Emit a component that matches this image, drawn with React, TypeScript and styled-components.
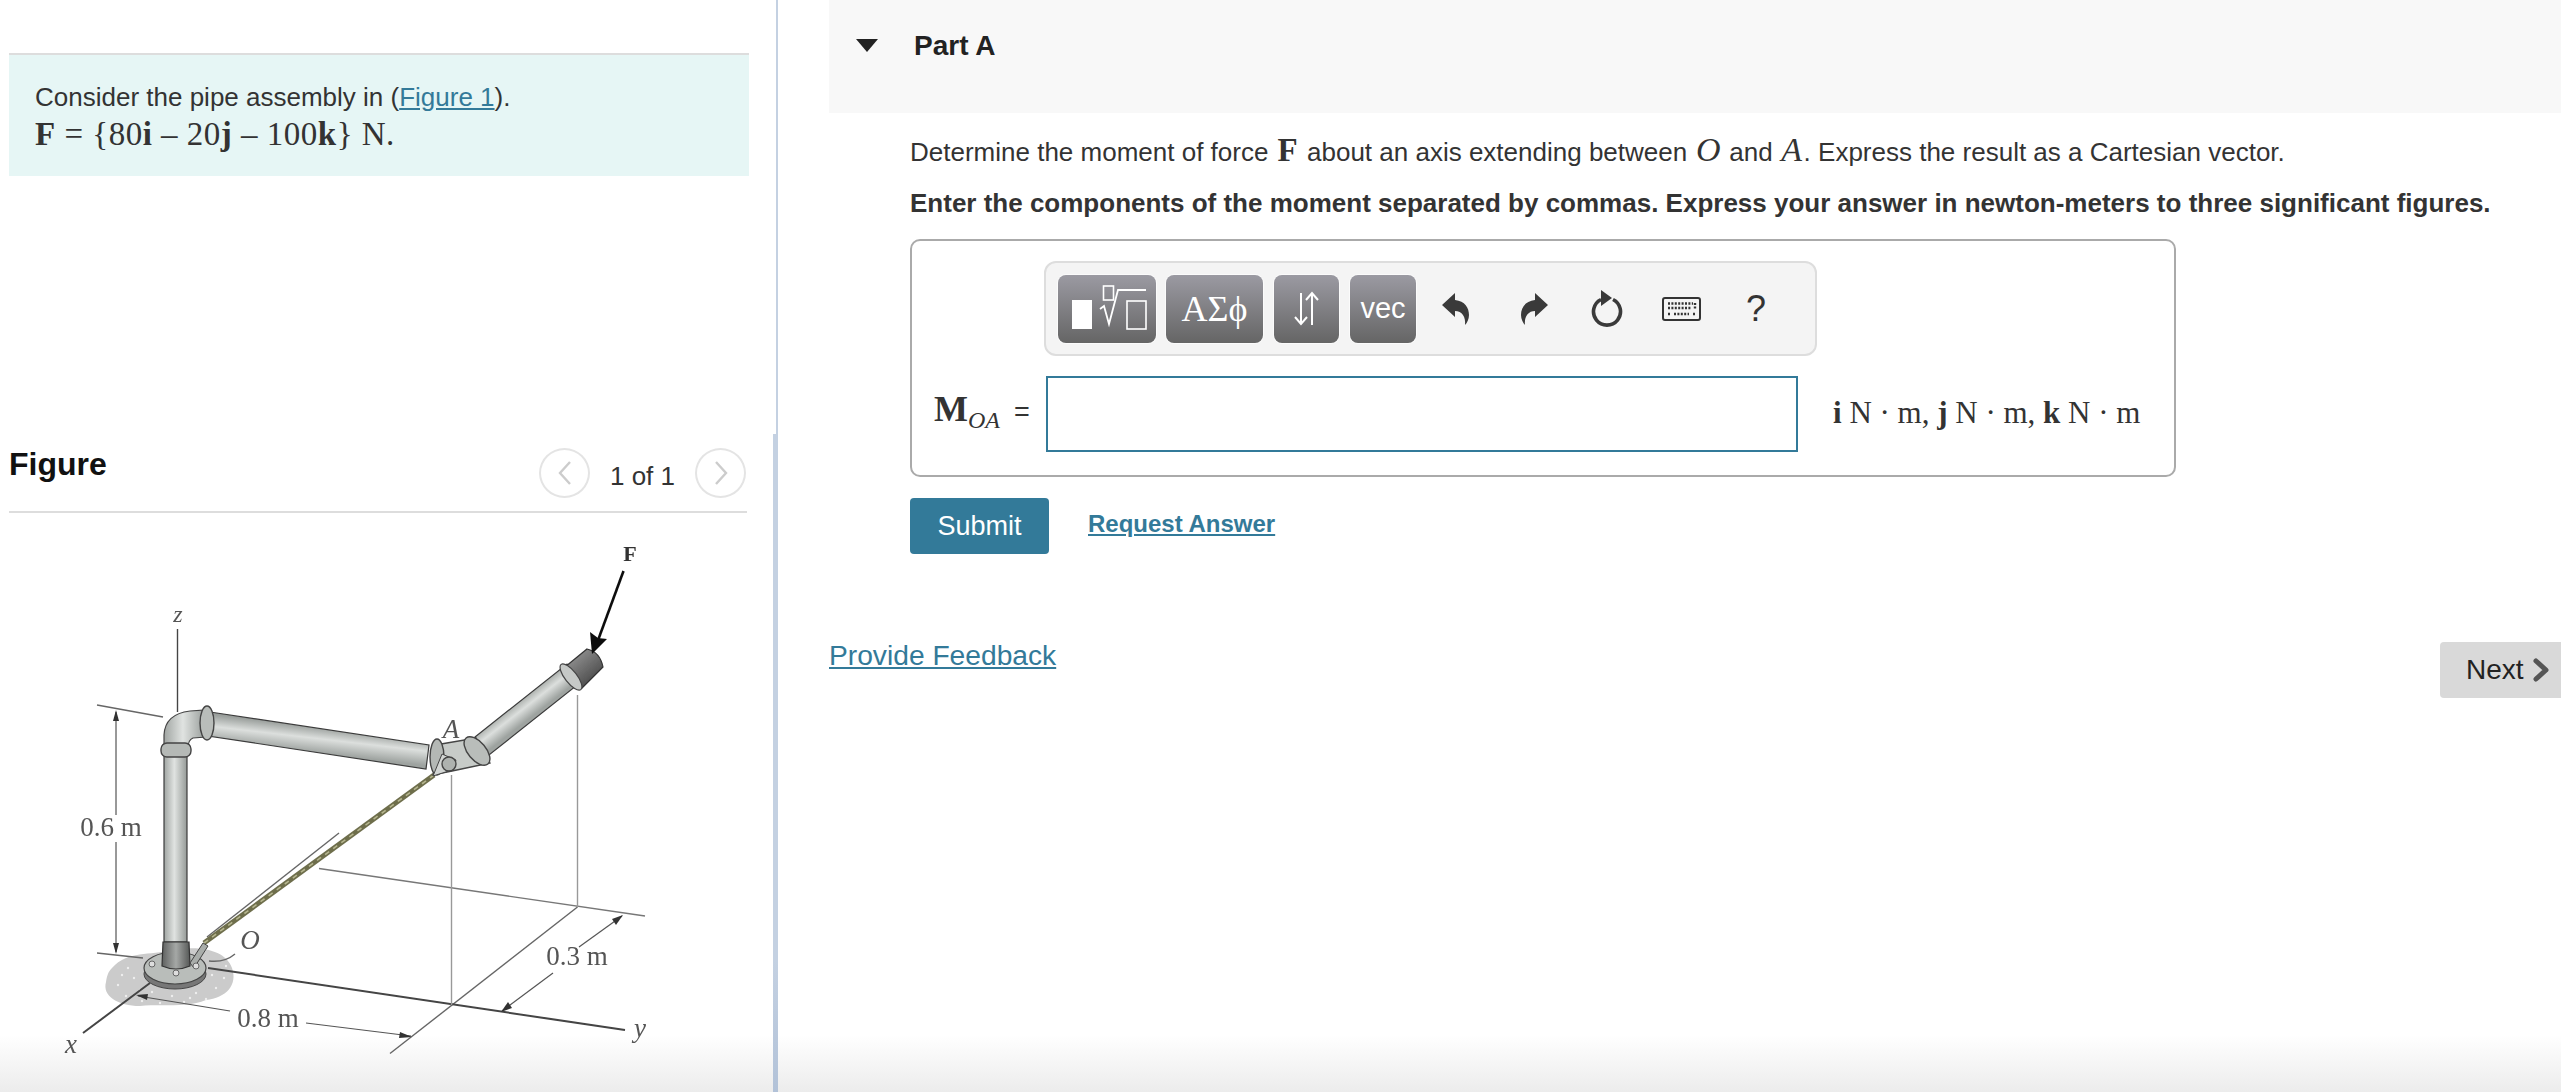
import React from "react";
import styled, { createGlobalStyle } from "styled-components";

const GlobalStyle = createGlobalStyle`
  html, body {
    margin: 0;
    height: 100%;
    overflow: hidden;
  }
  body {
    font-family: "Liberation Sans", Arial, sans-serif;
    color: #333;
    background: linear-gradient(to bottom, #fff 1035px, #ececec 1092px);
  }
  #root {
    height: 100%;
  }
`;

const Page = styled.div`
  display: flex;
  height: 100%;
`;

const LeftPanel = styled.aside`
  width: 764px;
  padding-left: 9px;
  padding-top: 53px;
  flex-shrink: 0;
`;

const Intro = styled.div`
  width: 740px;
  height: 123px;
  box-sizing: border-box;
  border-top: 2px solid #ddd;
  background: #e6f6f5;
  padding: 24px 26px 0;
  font-size: 26px;
  line-height: 36px;
`;

const Link = styled.a<{ $bold?: boolean }>`
  color: #337a99;
  text-decoration: underline;
  font-weight: ${({ $bold }) => ($bold ? 700 : 400)};
`;

const Formula = styled.div`
  font-family: "Liberation Serif", serif;
  font-size: 33px;
  letter-spacing: 0.5px;
  color: #333;
  margin-top: 1px;
`;

const FigureHeader = styled.div`
  margin-top: 272px;
  width: 738px;
  height: 65px;
  box-sizing: border-box;
  border-bottom: 2px solid #ddd;
  display: flex;
  align-items: flex-start;
`;

const FigureTitle = styled.h2`
  margin: 0;
  flex: 1;
  font-size: 32px;
  line-height: 33px;
  color: #111;
`;

const Pager = styled.div`
  display: flex;
  align-items: center;
  height: 50px;
  margin-right: 1px;
`;

const PagerText = styled.span`
  width: 105px;
  text-align: center;
  font-size: 26px;
  padding-top: 7px;
`;

const PagerButton = styled.button`
  width: 51px;
  height: 50px;
  padding: 0;
  border: 2px solid #e4e4e4;
  border-radius: 50%;
  background: #fff;
  display: flex;
  align-items: center;
  justify-content: center;
`;

const FigureArt = styled.svg`
  display: block;
  margin-left: -9px;
  margin-top: 7px;
`;

const Divider = styled.div`
  width: 5px;
  flex-shrink: 0;
  display: flex;
  flex-direction: column;
  align-items: flex-end;
`;

const DividerPart = styled.div<{ $wide?: boolean }>`
  background: ${({ $wide }) => ($wide ? "linear-gradient(#c4d1e2 80%, #b2c2d8)" : "#c4d1e2")};
  width: ${({ $wide }) => ($wide ? "5px" : "2px")};
  height: ${({ $wide }) => ($wide ? "658px" : "434px")};
`;

const RightPanel = styled.main`
  flex: 1;
  padding-left: 51px;
  min-width: 0;
`;

const PartHeader = styled.div`
  height: 113px;
  background: #f8f8f8;
  display: flex;
  padding: 28px 0 0 27px;
  box-sizing: border-box;
`;

const Caret = styled.div`
  width: 0;
  height: 0;
  margin-top: 11px;
  border-left: 11px solid transparent;
  border-right: 11px solid transparent;
  border-top: 13px solid #222;
`;

const PartTitle = styled.h3`
  margin: 0 0 0 36px;
  font-size: 28px;
  line-height: 36px;
  color: #222;
`;

const PartBody = styled.div`
  padding-left: 81px;
`;

const Prompt = styled.p`
  margin: 20px 0 0;
  font-size: 26px;
  line-height: 36px;
`;

const Instruction = styled.p`
  margin: 15px 0 0;
  font-size: 26px;
  line-height: 36px;
  font-weight: 700;
`;

const MathBold = styled.b`
  font-family: "Liberation Serif", serif;
  font-size: 33px;
  line-height: 1;
  margin: 0 2px;
`;

const MathItalic = styled.i`
  font-family: "Liberation Serif", serif;
  font-size: 34px;
  line-height: 1;
  margin: 0 1.5px;
`;

const AnswerBox = styled.div`
  margin-top: 18px;
  width: 1266px;
  height: 238px;
  box-sizing: border-box;
  border: 2px solid #aaa;
  border-radius: 10px;
  padding: 20px 0 0 132px;
`;

const Toolbar = styled.div`
  width: 773px;
  height: 95px;
  box-sizing: border-box;
  border: 2px solid #ddd;
  border-radius: 12px;
  background: #f4f4f4;
  display: flex;
  align-items: center;
  padding-left: 12px;
`;

const ToolButton = styled.button<{ $w: number; $gap: number }>`
  width: ${({ $w }) => $w}px;
  height: 68px;
  margin-right: ${({ $gap }) => $gap}px;
  padding: 0;
  border: 0;
  border-radius: 8px;
  background: linear-gradient(to bottom, #9b9aa2, #656565);
  box-shadow: 0 0 0 1px #fbfbfb;
  color: #fff;
  display: flex;
  align-items: center;
  justify-content: center;
  font-size: 29px;
  font-family: "Liberation Sans", sans-serif;
`;

const ToolSerif = styled.span`
  font-family: "Liberation Serif", serif;
  font-size: 36px;
`;

const ToolIcon = styled.svg<{ $left: number }>`
  display: block;
  margin-left: ${({ $left }) => $left}px;
  flex-shrink: 0;
`;

const HelpMark = styled.span`
  margin-left: 45px;
  font-size: 36px;
  color: #333;
`;

const AnswerRow = styled.div`
  display: flex;
  align-items: center;
  margin: 20px 0 0 -110px;
  height: 76px;
`;

const AnswerLabel = styled.div`
  width: 112px;
  flex-shrink: 0;
  font-family: "Liberation Serif", serif;
  font-size: 36px;
  white-space: nowrap;
  padding-bottom: 11px;
`;

const LabelSub = styled.i`
  font-size: 24px;
  position: relative;
  top: 7px;
`;

const LabelEquals = styled.span`
  font-family: "Liberation Sans", sans-serif;
  font-size: 27px;
  margin-left: 14px;
`;

const AnswerInput = styled.input`
  width: 752px;
  height: 76px;
  box-sizing: border-box;
  border: 2px solid #337a99;
  background: #fff;
  outline: none;
`;

const Units = styled.div`
  margin-left: 35px;
  padding-bottom: 2px;
  font-family: "Liberation Serif", serif;
  font-size: 31px;
  white-space: nowrap;
`;

const Actions = styled.div`
  display: flex;
  align-items: flex-start;
  margin-top: 21px;
`;

const SubmitButton = styled.button`
  width: 139px;
  height: 56px;
  border: 0;
  border-radius: 4px;
  background: #337a99;
  color: #fff;
  font-family: "Liberation Sans", sans-serif;
  font-size: 27px;
`;

const RequestLink = styled(Link)`
  margin: 11px 0 0 39px;
  font-size: 24px;
  line-height: 30px;
`;

const FooterRow = styled.div`
  display: flex;
  justify-content: space-between;
  align-items: flex-start;
  margin-top: 83px;
`;

const FeedbackLink = styled(Link)`
  font-size: 28.2px;
  line-height: 36px;
`;

const NextButton = styled.button`
  width: 121px;
  height: 56px;
  margin-top: 5px;
  border: 0;
  border-radius: 4px 0 0 4px;
  background: #d9d9d9;
  color: #222;
  font-family: "Liberation Sans", sans-serif;
  font-size: 28px;
  display: flex;
  align-items: center;
  gap: 9px;
  padding: 0 0 0 26px;
`;

const specks = [
  [118, 985], [126, 996], [134, 978], [142, 1001], [152, 992], [160, 1003], [172, 996],
  [184, 1002], [196, 993], [206, 999], [216, 988], [224, 978], [212, 975], [128, 968],
  [122, 975], [140, 990], [190, 998], [226, 966],
];

const PipeFigure = () => (
  <FigureArt width={764} height={572} viewBox="0 520 764 572">
    <defs>
      <linearGradient id="pipeV" x1="0" x2="1" y1="0" y2="0">
        <stop offset="0" stopColor="#a0a5a2" />
        <stop offset="0.45" stopColor="#e0e3e1" />
        <stop offset="1" stopColor="#959a97" />
      </linearGradient>
      <linearGradient id="pipeTop" gradientUnits="userSpaceOnUse" x1="320" y1="727" x2="317" y2="753">
        <stop offset="0" stopColor="#9a9f9c" />
        <stop offset="0.45" stopColor="#dcdfdd" />
        <stop offset="1" stopColor="#9ea3a0" />
      </linearGradient>
      <linearGradient id="pipeFar" gradientUnits="userSpaceOnUse" x1="516" y1="700" x2="530" y2="718">
        <stop offset="0" stopColor="#9a9f9c" />
        <stop offset="0.5" stopColor="#dcdfdd" />
        <stop offset="1" stopColor="#9ea3a0" />
      </linearGradient>
      <linearGradient id="capFill" gradientUnits="userSpaceOnUse" x1="575" y1="656" x2="595" y2="680">
        <stop offset="0" stopColor="#8c8c8c" />
        <stop offset="1" stopColor="#4c4c4c" />
      </linearGradient>
      <linearGradient id="socket" x1="0" x2="1" y1="0" y2="0">
        <stop offset="0" stopColor="#5e605f" />
        <stop offset="0.5" stopColor="#a5a8a6" />
        <stop offset="1" stopColor="#565857" />
      </linearGradient>
      <filter id="soft" x="-5%" y="-5%" width="110%" height="110%">
        <feGaussianBlur stdDeviation="0.7" />
      </filter>
      <filter id="softText" x="-5%" y="-5%" width="110%" height="110%">
        <feGaussianBlur stdDeviation="0.35" />
      </filter>
    </defs>
    <g filter="url(#soft)">
      {/* ground patch */}
      <path
        d="M112 968 C128 950 150 956 172 950 C200 945 226 950 232 968 C238 985 226 998 206 1000 C188 1008 160 1004 140 1006 C118 1006 102 996 106 982 C107 976 108 972 112 968 Z"
        fill="#cbcbcb"
      />
      {specks.map(([x, y]) => (
        <circle key={`${x}-${y}`} cx={x} cy={y} r="1.2" fill="#eee" />
      ))}
      {/* floor lines */}
      <g stroke="#666" strokeWidth="1.4" fill="none">
        <path d="M97 705 L163 717" />
        <path d="M97 953 L143 958" />
        <path d="M319 868.5 L645 916" stroke="#777" />
        <path d="M577.5 907 L390 1053.5" />
        <path d="M150 983 L83 1033" strokeWidth="2" stroke="#444" />
        <path d="M208 968 L625 1030" strokeWidth="2" stroke="#444" />
        <path d="M177.5 629 L177.5 712" stroke="#444" />
        <path d="M451.5 775 L451.5 1005" stroke="#999" />
        <path d="M577.5 695 L577.5 907" stroke="#999" />
        <path d="M339 833 L207 937" stroke="#666" />
        <path d="M235 954 C228 960 218 962 209 961" />
      </g>
      {/* dimension lines */}
      <g stroke="#555" strokeWidth="1.2" fill="none">
        <path d="M116 712 L116 815" />
        <path d="M116 842 L116 952" />
        <path d="M138 996 L230 1011" />
        <path d="M306 1023 L411 1036" />
        <path d="M622 916 L579 947" />
        <path d="M553 973 L502 1011" />
      </g>
      <g fill="#333">
        <path d="M116 710 L113 721 L119 721 Z" />
        <path d="M116 954 L113 943 L119 943 Z" />
        <path d="M136 995 L148 994 L147 1000 Z" />
        <path d="M412 1037 L400 1032 L399 1038 Z" />
        <path d="M623 915 L612 919 L616 925 Z" />
        <path d="M501 1012 L512 1008 L508 1002 Z" />
      </g>
      {/* rod from O to A */}
      <path d="M204 943 L434 775" stroke="#6e6e4c" strokeWidth="5" />
      <path d="M204 943 L434 775" stroke="#b5b58e" strokeWidth="1.6" strokeDasharray="5 5" />
      {/* far pipe */}
      <path d="M475 737 L567 664 L581 682 L489 755 Z" fill="url(#pipeFar)" stroke="#3b3b3b" strokeWidth="1.2" />
      <path d="M565 667 L587 649 Q600 652 603 667 L582 688 Z" fill="url(#capFill)" stroke="#333" strokeWidth="1.2" />
      <ellipse cx="571" cy="677" rx="6" ry="16" transform="rotate(-38 571 677)" fill="#c6c9c7" stroke="#444" strokeWidth="1.2" />
      {/* arrow F */}
      <path d="M623.5 571 L597 643" stroke="#111" strokeWidth="2.6" />
      <path d="M592 654 L590 632 L598 638 L607 639 Z" fill="#111" />
      {/* top run */}
      <path d="M210 712 L429 745 L426 769 L208 736 Z" fill="url(#pipeTop)" stroke="#3b3b3b" strokeWidth="1.2" />
      {/* elbow at the top of the column */}
      <path d="M164 748 L164 735 Q165 714 190 711 L206 710 L206 737 L193 738 Q188 740 188 748 Z" fill="url(#pipeV)" stroke="#444" strokeWidth="1.2" />
      <ellipse cx="207" cy="723" rx="7" ry="17" fill="#b9bdba" stroke="#444" strokeWidth="1.4" />
      {/* column */}
      <rect x="164" y="754" width="23" height="188" fill="url(#pipeV)" stroke="#3b3b3b" strokeWidth="1.2" />
      <rect x="161" y="743" width="30" height="14" rx="6" fill="#b5b9b6" stroke="#444" strokeWidth="1.4" />
      {/* flange and socket */}
      <ellipse cx="175" cy="974" rx="31" ry="15" fill="#777" stroke="#444" />
      <ellipse cx="175" cy="968" rx="31" ry="16" fill="#b9bdba" stroke="#444" strokeWidth="1.2" />
      <path d="M163 942 L189 942 L190 966 Q176 972 162 966 Z" fill="url(#socket)" stroke="#333" strokeWidth="1.2" />
      <path d="M190 963 L203 943 L208 946 L194 968 Z" fill="#a9adaa" stroke="#444" />
      <circle cx="152" cy="964" r="3" fill="#ddd" stroke="#666" />
      <circle cx="176" cy="973" r="3" fill="#ddd" stroke="#666" />
      <circle cx="196" cy="966" r="3" fill="#ddd" stroke="#666" />
      {/* joint at A */}
      <path d="M441 744 L476 738 L490 763 L452 771 L433 775 Z" fill="#c7cbc8" stroke="#444" strokeWidth="1.3" />
      <ellipse cx="437" cy="757" rx="7" ry="18" fill="#b4b8b5" stroke="#444" strokeWidth="1.4" />
      <path d="M433 776 L442 754 L456 760 L452 770 Z" fill="#d2d5d3" stroke="#444" />
      <circle cx="449" cy="764" r="7" fill="#aeb2af" stroke="#444" strokeWidth="1.4" />
      <ellipse cx="477" cy="751" rx="9" ry="17" transform="rotate(-40 477 751)" fill="#b9bdba" stroke="#444" strokeWidth="1.4" />
    </g>
    <g filter="url(#softText)" fontFamily="'Liberation Serif', serif" fontSize="27" fill="#555">
      <text x="630" y="561" fontWeight="700" fontSize="22" textAnchor="middle" fill="#333">F</text>
      <text x="178" y="622" fontStyle="italic" fontSize="24" textAnchor="middle">z</text>
      <text x="451" y="738" fontStyle="italic" textAnchor="middle">A</text>
      <text x="250" y="949" fontStyle="italic" textAnchor="middle">O</text>
      <text x="111" y="836" textAnchor="middle">0.6 m</text>
      <text x="577" y="965" textAnchor="middle">0.3 m</text>
      <text x="268" y="1027" textAnchor="middle">0.8 m</text>
      <text x="71" y="1053" fontStyle="italic" textAnchor="middle">x</text>
      <text x="640" y="1037" fontStyle="italic" textAnchor="middle">y</text>
    </g>
  </FigureArt>
);

const RootIcon = () => (
  <svg width="98" height="68" viewBox="0 0 98 68" fill="none">
    <rect x="14" y="25" width="20" height="29" fill="#fff" />
    <rect x="45.5" y="11" width="10" height="14" stroke="#fff" strokeWidth="1.6" />
    <path d="M42 34 L46 31 L51 49 L60 15 L88 15" stroke="#fff" strokeWidth="1.8" />
    <rect x="69" y="26" width="19" height="28" stroke="#fff" strokeWidth="1.6" />
  </svg>
);

const ArrowsIcon = () => (
  <svg width="30" height="36" viewBox="0 0 30 36" fill="none" stroke="#fff" strokeWidth="2">
    <path d="M9 2 L9 33 M3 26 L9 33 L15 26" />
    <path d="M20 34 L20 2 M14 9 L20 2 L26 9" />
  </svg>
);

const Undo = ({ $left, flip }: { $left: number; flip?: boolean }) => (
  <ToolIcon $left={$left} width="27" height="32" viewBox="0 0 27 32">
    <path
      d={
        flip
          ? "M27 12 L14 0 L14 7 C4 8 0 15 0 22 C0 26 2 30 4 32 C3 24 7 18 14 18 L14 24 Z"
          : "M0 12 L13 0 L13 7 C23 8 27 15 27 22 C27 26 25 30 23 32 C24 24 20 18 13 18 L13 24 Z"
      }
      fill="#3a3a3a"
    />
  </ToolIcon>
);

const App = () => (
  <Page>
    <GlobalStyle />
    <LeftPanel>
      <Intro>
        Consider the pipe assembly in (<Link href="#">Figure 1</Link>).
        <Formula>
          <b>F</b> = {"{"}80<b>i</b> – 20<b>j</b> – 100<b>k</b>
          {"}"} N.
        </Formula>
      </Intro>
      <FigureHeader>
        <FigureTitle>Figure</FigureTitle>
        <Pager>
          <PagerButton aria-label="previous">
            <svg width="16" height="26" viewBox="0 0 16 26" fill="none" stroke="#ccc" strokeWidth="2.4">
              <path d="M13 2 L3 13 L13 24" />
            </svg>
          </PagerButton>
          <PagerText>1 of 1</PagerText>
          <PagerButton aria-label="next">
            <svg width="16" height="26" viewBox="0 0 16 26" fill="none" stroke="#ccc" strokeWidth="2.4">
              <path d="M3 2 L13 13 L3 24" />
            </svg>
          </PagerButton>
        </Pager>
      </FigureHeader>
      <PipeFigure />
    </LeftPanel>
    <Divider>
      <DividerPart />
      <DividerPart $wide />
    </Divider>
    <RightPanel>
      <PartHeader>
        <Caret />
        <PartTitle>Part A</PartTitle>
      </PartHeader>
      <PartBody>
        <Prompt>
          Determine the moment of force <MathBold>F</MathBold> about an axis extending between{" "}
          <MathItalic>O</MathItalic> and <MathItalic>A</MathItalic>. Express the result as a Cartesian vector.
        </Prompt>
        <Instruction>
          Enter the components of the moment separated by commas. Express your answer in newton-meters to three
          significant figures.
        </Instruction>
        <AnswerBox>
          <Toolbar>
            <ToolButton $w={98} $gap={10} aria-label="templates">
              <RootIcon />
            </ToolButton>
            <ToolButton $w={97} $gap={11}>
              <ToolSerif>ΑΣϕ</ToolSerif>
            </ToolButton>
            <ToolButton $w={65} $gap={11} aria-label="arrows">
              <ArrowsIcon />
            </ToolButton>
            <ToolButton $w={66} $gap={0}>vec</ToolButton>
            <Undo $left={26} />
            <Undo $left={52} flip />
            <ToolIcon $left={43} width="32" height="37" viewBox="0 0 32 37" fill="none">
              <path d="M10 9.5 A13.5 13.5 0 1 0 22 9.5" stroke="#3a3a3a" strokeWidth="3.6" />
              <path d="M10 0 L21 8 L10 16 Z" fill="#3a3a3a" />
            </ToolIcon>
            <ToolIcon $left={39} width="39" height="24" viewBox="0 0 39 24" fill="none">
              <rect x="1" y="1" width="37" height="22" rx="2" stroke="#333" strokeWidth="2" />
              <path d="M6 6.5 H31 M6 11 H29 M6 17 H8 M12 17 H27 M31 17 H33 M33 6 V12" stroke="#333" strokeWidth="2.4" strokeDasharray="2 1.4" />
            </ToolIcon>
            <HelpMark>?</HelpMark>
          </Toolbar>
          <AnswerRow>
            <AnswerLabel>
              <b>M</b>
              <LabelSub>OA</LabelSub>
              <LabelEquals>=</LabelEquals>
            </AnswerLabel>
            <AnswerInput aria-label="moment" />
            <Units>
              <b>i</b> N · m, <b>j</b> N · m, <b>k</b> N · m
            </Units>
          </AnswerRow>
        </AnswerBox>
        <Actions>
          <SubmitButton>Submit</SubmitButton>
          <RequestLink href="#" $bold>
            Request Answer
          </RequestLink>
        </Actions>
      </PartBody>
      <FooterRow>
        <FeedbackLink href="#">Provide Feedback</FeedbackLink>
        <NextButton>
          Next
          <svg width="16" height="24" viewBox="0 0 16 24" fill="none" stroke="#555" strokeWidth="5" strokeLinejoin="round" strokeLinecap="round">
            <path d="M3 3 L13 12 L3 21" />
          </svg>
        </NextButton>
      </FooterRow>
    </RightPanel>
  </Page>
);

export default App;
